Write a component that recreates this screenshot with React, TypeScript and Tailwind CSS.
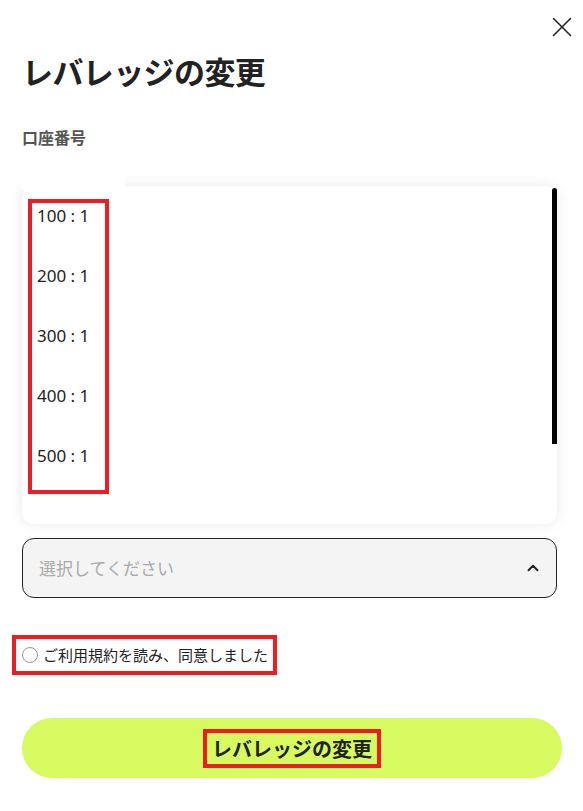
import { X, ChevronUp } from "lucide-react";

const leverages = ["100 : 1", "200 : 1", "300 : 1", "400 : 1", "500 : 1"];

const jp = { fontFamily: '"Noto Sans CJK JP", "Noto Sans", sans-serif' };

export default function App() {
  return (
    <div className="min-h-screen w-[583px] bg-white text-[#222]" style={jp}>
      <div className="flex justify-end pt-[10px] pr-[4px]">
        <button className="text-[#222]">
          <X size={34} strokeWidth={1.1} />
        </button>
      </div>

      <div className="px-[22px]">
        <h1 className="mt-[7px] text-[31px] font-bold leading-[40px] tracking-[-0.6px]">レバレッジの変更</h1>
        <p className="mt-[34px] text-[16px] font-bold leading-[24px] text-[#555]">口座番号</p>

        {/* select opened upward, menu floats over the fields above */}
        <div className="relative mt-[389px] w-[535px]">
          <div className="absolute bottom-[calc(100%+14px)] left-0 w-[535px] h-[338px] rounded-[12px] bg-white shadow-[0_0_14px_rgba(0,0,0,0.09)]">
            <div className="absolute left-0 top-[-10px] h-[14px] w-[103px] bg-white" />
            <ul className="relative">
              {leverages.map((v) => (
                <li key={v} className="flex h-[60px] items-center pl-[15px] text-[17px] text-[#222]" style={{ fontFamily: '"Noto Sans", sans-serif' }}>
                  {v}
                </li>
              ))}
            </ul>
            <div className="absolute left-[6px] top-[13px] h-[295px] w-[81px] border-4 border-[#ee1c25]" />
            <div className="absolute right-0 top-[2px] h-[256px] w-[5px] rounded-t-[4px] bg-black" />
          </div>

          <div className="flex h-[60px] items-center justify-between rounded-[12px] border border-[#222] bg-[#f4f4f4] pl-[16px] pr-[14px]">
            <span className="text-[17px] text-[#aaa]">選択してください</span>
            <ChevronUp size={18} strokeWidth={2.6} className="text-[#222]" />
          </div>
        </div>
      </div>

      <div className="mt-[37px] ml-[12px] inline-flex h-[40px] w-[265px] items-center gap-[5px] border-4 border-[#ee1c25] pl-[6px]">
        <span className="h-[16px] w-[16px] rounded-full border border-[#999] bg-white" />
        <span className="text-[15px] leading-[20px]">ご利用規約を読み、同意しました</span>
      </div>

      <div className="px-[22px] pt-[43px] pb-[33px]">
        <button className="flex h-[60px] w-[540px] items-center justify-center rounded-full bg-[#d6fa60]">
          <span className="border-4 border-[#ee1c25] px-[5px] text-[20px] font-bold leading-[31px] text-[#222]">レバレッジの変更</span>
        </button>
      </div>
    </div>
  );
}
